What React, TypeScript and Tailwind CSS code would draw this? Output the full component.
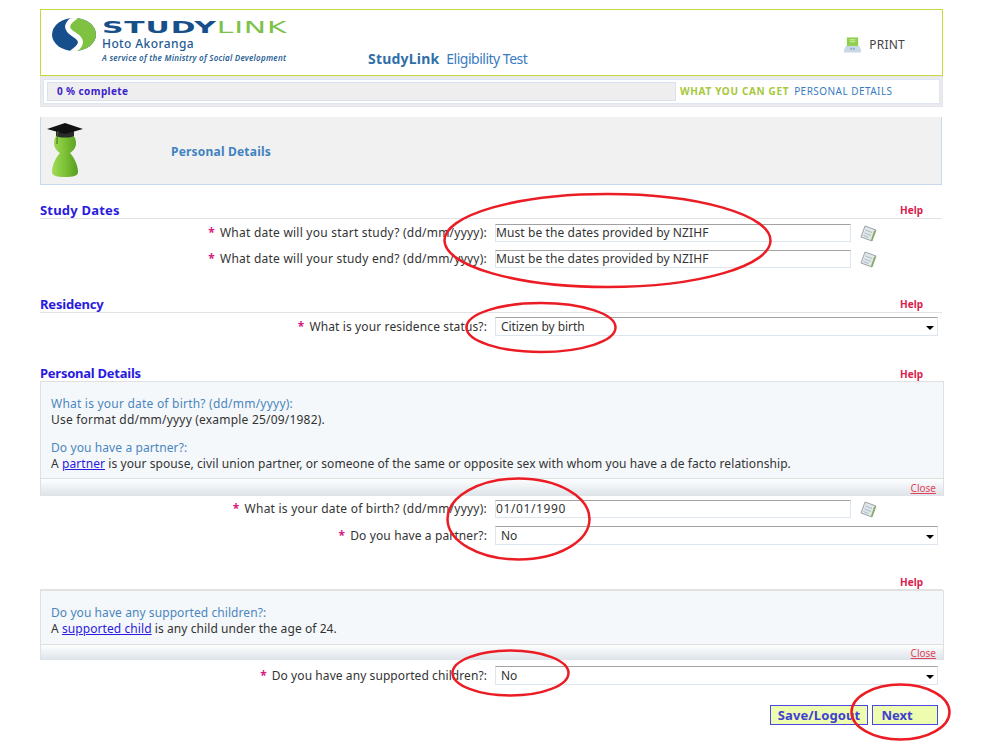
import React from 'react';

const FONT = "font-['Noto_Sans','Liberation_Sans',sans-serif]";

function LogoMark() {
  return (
    <svg width="44" height="33" viewBox="0 0 44 33" className="shrink-0">
      <defs>
        <clipPath id="logoClip">
          <ellipse cx="22" cy="16.500" rx="22" ry="16.500" />
        </clipPath>
      </defs>
      <g clipPath="url(#logoClip)">
        <rect width="44" height="33" fill="#164f8c" />
        <path d="M25-2C13 6 13 11 22 16.500 31 22 31 27 19 35H46V-2Z" fill="#7fc241" />
        <path d="M25-2C13 6 13 11 22 16.500 31 22 31 27 19 35" fill="none" stroke="#fff" strokeWidth="5" />
      </g>
    </svg>
  );
}

function Mascot() {
  return (
    <svg width="38" height="56" viewBox="0 0 38 56" className="shrink-0">
      <defs>
        <linearGradient id="body" x1="0" y1="0" x2="1" y2="0">
          <stop offset="0" stopColor="#a2dc58" />
          <stop offset="0.5" stopColor="#7cc136" />
          <stop offset="1" stopColor="#589c20" />
        </linearGradient>
      </defs>
      <path
        d="M19 10C12 10 8 15 8 21c0 5 3 8 6 10-4 4-8 12-8 19 0 4 5 5 13 5s13-1 13-5c0-7-4-15-8-19 3-2 6-5 6-10 0-6-4-11-11-11Z"
        fill="url(#body)"
      />
      <path d="M10 9h18v5c-4 2-14 2-18 0Z" fill="#2b2b2b" />
      <path d="M19 1 37 7 19 12 1 7Z" fill="#111" />
      <path d="M12 9c-1 5-1 8-1 13" stroke="#3d6b12" strokeWidth="1" fill="none" />
    </svg>
  );
}

function PrintIcon() {
  return (
    <svg width="17" height="16" viewBox="0 0 18 16" className="shrink-0">
      <rect x="3" y="0" width="12" height="9" fill="#8fd14f" />
      <rect x="6" y="2" width="6" height="1" fill="#d6f0b0" />
      <rect x="6" y="4" width="6" height="1" fill="#d6f0b0" />
      <path d="M2 9h14l2 4v3H0v-3Z" fill="#c9d8e8" />
      <rect x="7" y="11" width="1" height="2" fill="#6b7a8a" />
      <rect x="10" y="11" width="1" height="2" fill="#6b7a8a" />
    </svg>
  );
}

function NoteIcon() {
  return (
    <svg width="17" height="17" viewBox="0 0 17 17" className="shrink-0">
      <path d="M5 1 16 5l-4 11L1 12Z" fill="#e2e7e9" stroke="#9aa3a8" strokeWidth="1" />
      <path d="M5.500 5l6.500 2.500M4.500 8l6.500 2.500M3.500 10.500l5 2" stroke="#a9bcc9" strokeWidth="1" />
      <path d="M16 5l-4 11-1-1 3-9Z" fill="#7fb052" />
    </svg>
  );
}

function SectionHead({ title, className, titleClass }: { title?: string; className: string; titleClass?: string }) {
  return (
    <div className={`flex items-center justify-between border-b border-[#e2e2e2] ${className}`}>
      <span className={`text-[13px] font-bold text-[#2a1ae0] ${titleClass ?? ''}`}>{title}</span>
      <span className="mr-[19px] text-[10px] font-bold text-[#d8204a]">Help</span>
    </div>
  );
}

function Label({ text, tracking }: { text: string; tracking: string }) {
  return (
    <div className={`w-[447px] shrink-0 text-right text-[12px] text-[#333] ${tracking}`}>
      <span className="mr-[5px] font-bold text-[#d81b80]">*</span>
      {text}
    </div>
  );
}

function DateRow({ label, value, className, valueClass }: { label: string; value: string; className: string; valueClass: string }) {
  return (
    <div className={`flex items-center ${className}`}>
      <Label text={label} tracking="tracking-[0.23px]" />
      <input
        readOnly
        value={value}
        className={`ml-[8px] h-[18px] w-[356px] border border-[#dde5ef] border-t-[#a2a2a2] text-[12px] text-[#333] outline-none ${valueClass}`}
      />
      <span className="ml-[9px]">
        <NoteIcon />
      </span>
    </div>
  );
}

function SelectRow({ label, value, className, tracking }: { label: string; value: string; className: string; tracking: string }) {
  return (
    <div className={`flex items-center ${className}`}>
      <Label text={label} tracking={tracking} />
      <div className="relative ml-[8px] w-[443px]">
        <select
          defaultValue={value}
          className="block h-[19px] w-full appearance-none rounded-none border border-[#dde5ef] border-t-[#a2a2a2] pl-[5px] text-[12px] tracking-[-0.07px] text-[#333] outline-none"
        >
          <option>{value}</option>
        </select>
        <span className="pointer-events-none absolute right-[4px] top-[9px] h-0 w-0 border-x-[4px] border-t-[4px] border-x-transparent border-t-black" />
      </div>
    </div>
  );
}

function InfoFooter({ className }: { className: string }) {
  return (
    <div className={`flex items-end justify-end border-t border-[#dfdfdf] bg-gradient-to-b from-[#fdfefe] to-[#dde3e9] pr-[7px] ${className}`}>
      <a className="text-[10px] text-[#e0455a] underline">Close</a>
    </div>
  );
}

export default function App() {
  return (
    <div className={`relative h-[745px] w-[1000px] overflow-hidden bg-white pl-[40px] pt-[9px] ${FONT}`}>
      {/* Header */}
      <div className="flex h-[67px] w-[903px] border border-[#c6da3f]">
        <div className="ml-[11px] mt-[8px] flex w-[316px] gap-[6px]">
          <LogoMark />
          <div className="flex flex-col pt-[3px]">
            <div className="origin-left scale-x-[1.86] font-['DejaVu_Sans',sans-serif] text-[16px] font-bold leading-[14px] tracking-[0.5px] text-[#174f8b] whitespace-nowrap">
              STUDY<span className="font-normal text-[#7cc24a]">LINK</span>
            </div>
            <div className="mt-[2px] text-[12px] font-medium leading-[14px] tracking-[0.4px] text-[#1f5a94]">Hoto Akoranga</div>
            <div className="mt-[1px] whitespace-nowrap text-[8px] font-semibold italic leading-[11px] tracking-[0.25px] text-[#2a5f95]">
              A service of the Ministry of Social Development
            </div>
          </div>
        </div>
        <div className="mt-[38px] whitespace-nowrap text-[14px] text-[#3a7bbf]">
          <span className="font-bold tracking-[0.2px] text-[#2f6fa8]">StudyLink</span>
          <span className="ml-[7px] tracking-[-0.5px]">Eligibility Test</span>
        </div>
        <div className="ml-auto mr-[37px] mt-[26px] flex h-[17px] items-center gap-[8px] text-[12px] tracking-[0.25px] text-[#444]">
          <PrintIcon />
          PRINT
        </div>
      </div>

      {/* Progress */}
      <div className="h-[31px] w-[903px] border border-[#e4e6ea] bg-[#e9ebef] p-[2px]">
        <div className="flex h-[25px] items-center border border-[#dfe6f2] bg-white pl-[3px]">
          <div className="flex h-[19px] w-[629px] items-center border border-[#d7e1f0] bg-[#eeeeee] pl-[9px] text-[10px] font-bold tracking-[0.4px] text-[#3a22cc]">
            0 % complete
          </div>
          <span className="ml-[4px] text-[10px] font-bold tracking-[0.65px] text-[#a6c83c]">WHAT YOU CAN GET</span>
          <span className="ml-[5px] text-[10px] tracking-[0.45px] text-[#3a7bbf]">PERSONAL DETAILS</span>
        </div>
      </div>

      {/* Page title */}
      <div className="mt-[10px] flex h-[68px] w-[902px] items-start border-x border-b border-[#c8d8ef] bg-[#f1f1f1]">
        <div className="ml-[5px] mt-[5px]">
          <Mascot />
        </div>
        <div className="ml-[87px] mt-[26px] text-[12px] font-bold leading-[18px] tracking-[0.2px] text-[#3f83c0]">Personal Details</div>
      </div>

      <div className="w-[902px]">
        <SectionHead title="Study Dates" className="mt-[18px] h-[16px]" titleClass="tracking-[0.2px]" />
        <DateRow
          label="What date will you start study? (dd/mm/yyyy):"
          value="Must be the dates provided by NZIHF"
          className="mt-[5px] h-[18px]"
          valueClass="tracking-[0.1px]"
        />
        <DateRow
          label="What date will your study end? (dd/mm/yyyy):"
          value="Must be the dates provided by NZIHF"
          className="mt-[8px] h-[18px]"
          valueClass="tracking-[0.1px]"
        />

        <SectionHead title="Residency" className="mt-[29px] h-[16px]" titleClass="tracking-[-0.2px]" />
        <SelectRow label="What is your residence status?:" value="Citizen by birth" className="mt-[4px] h-[19px]" tracking="tracking-[0.12px]" />

        <div className="mt-[29px] flex h-[16px] items-center justify-between pt-[2px]">
          <span className="text-[13px] font-bold tracking-[-0.25px] text-[#2a1ae0]">Personal Details</span>
          <span className="mr-[19px] text-[10px] font-bold text-[#d8204a]">Help</span>
        </div>
      </div>

      {/* Help panel: date of birth / partner */}
      <div className="h-[115px] w-[904px] border-x border-t border-[#e0e0e0] bg-[#f5f8fa]">
        <div className="h-[96px] pl-[10px] pt-[14px] text-[12px] leading-[16px] text-[#333]">
          <div className="tracking-[0.22px] text-[#4a86c0]">What is your date of birth? (dd/mm/yyyy):</div>
          <div className="tracking-[0.2px]">Use format dd/mm/yyyy (example 25/09/1982).</div>
          <div className="mt-[12px] tracking-[0.1px] text-[#4a86c0]">Do you have a partner?:</div>
          <div className="tracking-[0.08px]">
            A <a className="text-[#2a1ae0] underline">partner</a> is your spouse, civil union partner, or someone of the same or opposite sex with whom you have a de facto relationship.
          </div>
        </div>
        <InfoFooter className="h-[18px] leading-[16px]" />
      </div>

      <div className="w-[902px]">
        <DateRow label="What is your date of birth? (dd/mm/yyyy):" value="01/01/1990" className="mt-[4px] h-[18px]" valueClass="tracking-[0.6px]" />
        <SelectRow label="Do you have a partner?:" value="No" className="mt-[8px] h-[19px]" tracking="tracking-[0.12px]" />
        <SectionHead className="mt-[29px] h-[16px] [&>span]:mt-[2px]" />
      </div>

      {/* Help panel: supported children */}
      <div className="h-[70px] w-[904px] border-x border-t border-[#e0e0e0] bg-[#f5f8fa]">
        <div className="h-[53px] pl-[10px] pt-[14px] text-[12px] leading-[16px] tracking-[0.08px] text-[#333]">
          <div className="text-[#4a86c0]">Do you have any supported children?:</div>
          <div>
            A <a className="text-[#2a1ae0] underline">supported child</a> is any child under the age of 24.
          </div>
        </div>
        <InfoFooter className="h-[16px] leading-[14px]" />
      </div>

      <div className="w-[902px]">
        <SelectRow label="Do you have any supported children?:" value="No" className="mt-[6px] h-[19px]" tracking="tracking-[0.08px]" />
        <div className="mt-[20px] flex justify-end gap-[4px] pr-[4px]">
          <button className="h-[20px] w-[98px] border border-[#4a4ae0] bg-[#eefcb0] text-[13px] font-bold tracking-[0.1px] text-[#4040d0]">Save/Logout</button>
          <button className="h-[20px] w-[66px] border border-[#4a4ae0] bg-[#eefcb0] pr-[16px] text-[13px] font-bold text-[#4040d0]">Next</button>
        </div>
      </div>

      {/* Hand-drawn red annotations over the form */}
      <svg width="1000" height="745" className="pointer-events-none absolute left-0 top-0">
        <g fill="none" stroke="#ec1c24" strokeWidth="2.500">
          <ellipse cx="607.500" cy="240.500" rx="163" ry="46.500" />
          <ellipse cx="541" cy="327.500" rx="74.500" ry="24.500" />
          <ellipse cx="518.500" cy="519" rx="71" ry="40.500" />
          <ellipse cx="510.500" cy="673" rx="58" ry="22.500" />
          <ellipse cx="900.500" cy="712" rx="49" ry="27.500" />
        </g>
      </svg>
    </div>
  );
}
